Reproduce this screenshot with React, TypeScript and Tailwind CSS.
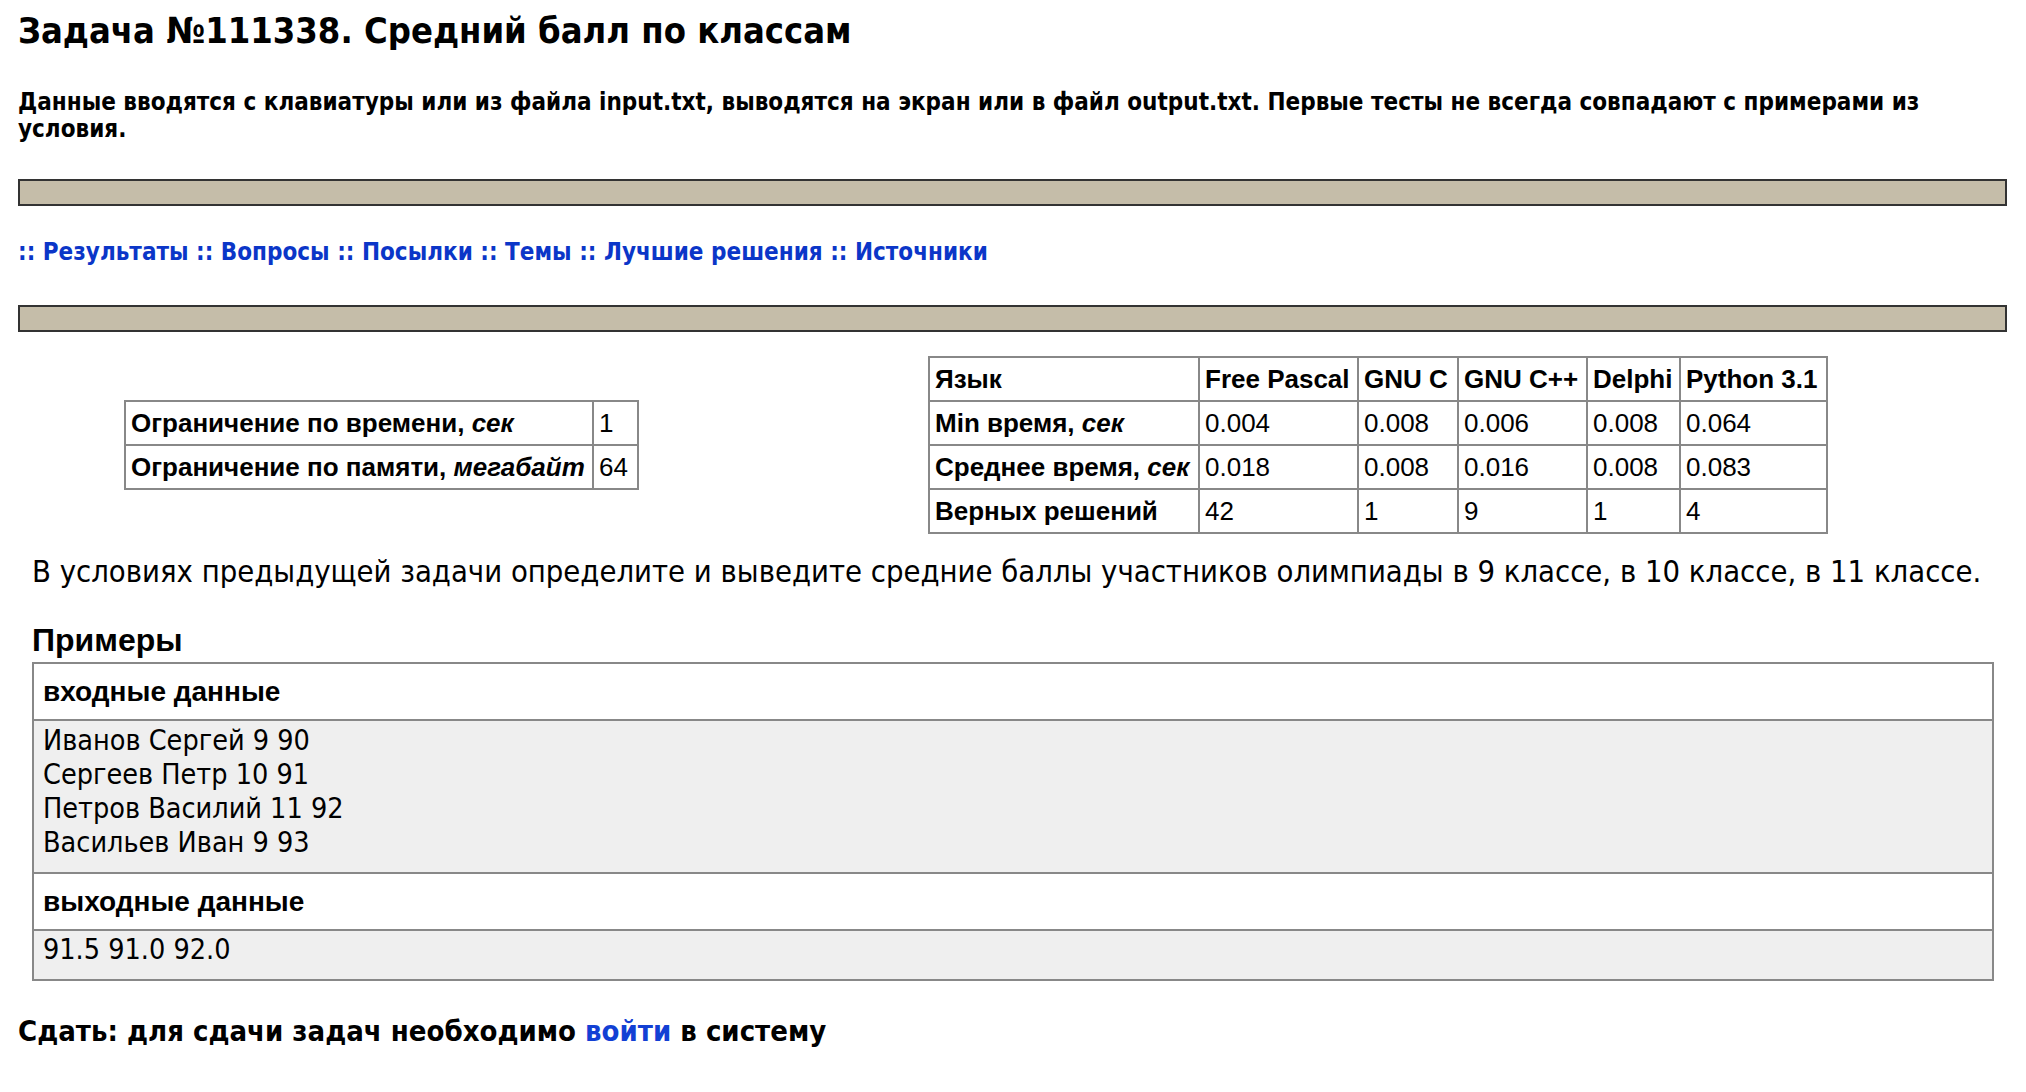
import React from "react";

const tahoma = "font-['DejaVu_Sans_Condensed','DejaVu_Sans',sans-serif]";
const arial = "font-['Liberation_Sans',Arial,sans-serif]";

const navItems = ["Результаты", "Вопросы", "Посылки", "Темы", "Лучшие решения", "Источники"];

const langs = [
  { name: "Free Pascal", w: "w-[159px]", min: "0.004", avg: "0.018", ok: "42" },
  { name: "GNU C", w: "w-[100px]", min: "0.008", avg: "0.008", ok: "1" },
  { name: "GNU C++", w: "w-[129px]", min: "0.006", avg: "0.016", ok: "9" },
  { name: "Delphi", w: "w-[93px]", min: "0.008", avg: "0.008", ok: "1" },
  { name: "Python 3.1", w: "w-[147px]", min: "0.064", avg: "0.083", ok: "4" },
];

function Bar() {
  return <div className="h-[27px] border-2 border-[#333333] bg-[#c5bda9]" />;
}

const cell = "border-2 border-[#888888] px-[5px] h-[44px] align-middle text-left whitespace-nowrap";

export default function App() {
  return (
    <div className="min-h-[1092px] bg-white text-black pl-[18px] pr-[19px]">
      <h1 className={`${tahoma} font-bold text-[36px] leading-[44px] pt-[9px]`}>
        Задача №111338. Средний балл по классам
      </h1>

      <p className={`${tahoma} font-bold text-[24px] leading-[27px] mt-[36px]`}>
        Данные вводятся с клавиатуры или из файла input.txt, выводятся на экран или в файл output.txt. Первые тесты не всегда совпадают с примерами из условия.
      </p>

      <div className="mt-[36px]">
        <Bar />
      </div>

      <div className={`${tahoma} font-bold text-[24px] leading-[30px] text-[#0b36c8] mt-[31px]`}>
        {navItems.map((n) => (
          <span key={n}>
            :: <a className="cursor-pointer">{n}</a>{" "}
          </span>
        ))}
      </div>

      <div className="mt-[38px]">
        <Bar />
      </div>

      <div className={`${arial} text-[26px] flex items-center mt-[24px] pl-[106px] gap-[289px]`}>
        <table className="border-collapse border-2 border-[#333333]">
          <tbody>
            <tr>
              <th className={`${cell} w-[468px]`}>
                Ограничение по времени, <i>сек</i>
              </th>
              <td className={`${cell} w-[45px]`}>1</td>
            </tr>
            <tr>
              <th className={cell}>
                Ограничение по памяти, <i>мегабайт</i>
              </th>
              <td className={cell}>64</td>
            </tr>
          </tbody>
        </table>

        <table className="border-collapse border-2 border-[#333333]">
          <tbody>
            <tr>
              <th className={`${cell} w-[270px]`}>Язык</th>
              {langs.map((l) => (
                <th key={l.name} className={`${cell} ${l.w}`}>
                  {l.name}
                </th>
              ))}
            </tr>
            <tr>
              <th className={cell}>
                Min время, <i>сек</i>
              </th>
              {langs.map((l) => (
                <td key={l.name} className={cell}>
                  {l.min}
                </td>
              ))}
            </tr>
            <tr>
              <th className={cell}>
                Среднее время, <i>сек</i>
              </th>
              {langs.map((l) => (
                <td key={l.name} className={cell}>
                  {l.avg}
                </td>
              ))}
            </tr>
            <tr>
              <th className={cell}>Верных решений</th>
              {langs.map((l) => (
                <td key={l.name} className={cell}>
                  {l.ok}
                </td>
              ))}
            </tr>
          </tbody>
        </table>
      </div>

      <div className="pl-[14px] pr-[13px]">
        <p className={`${tahoma} text-[30.7px] leading-[38px] mt-[19px] whitespace-nowrap`}>
          В условиях предыдущей задачи определите и выведите средние баллы участников олимпиады в 9 классе, в 10 классе, в 11 классе.
        </p>

        <h2 className={`${arial} font-bold text-[32px] leading-[38px] mt-[30px]`}>Примеры</h2>

        <div className="mt-[3px] border-2 border-[#888888]">
          <div className={`${arial} font-bold text-[28px] h-[55px] flex items-center pl-[9px]`}>
            входные данные
          </div>
          <div className={`${tahoma} text-[28.5px] leading-[34px] bg-[#efefef] border-t-2 border-[#888888] pl-[9px] pt-[3px] pb-[12px] whitespace-pre`}>
            {"Иванов Сергей 9 90\nСергеев Петр 10 91\nПетров Василий 11 92\nВасильев Иван 9 93"}
          </div>
          <div className={`${arial} font-bold text-[28px] h-[57px] flex items-center pl-[9px] border-t-2 border-[#888888]`}>
            выходные данные
          </div>
          <div className={`${tahoma} text-[28.5px] leading-[34px] bg-[#efefef] border-t-2 border-[#888888] pl-[9px] pt-[2px] pb-[12px]`}>
            91.5 91.0 92.0
          </div>
        </div>
      </div>

      <p className={`${tahoma} font-bold text-[29px] leading-[36px] mt-[32px]`}>
        Сдать: для сдачи задач необходимо <a className="text-[#1240d4] cursor-pointer">войти</a> в систему
      </p>
    </div>
  );
}
